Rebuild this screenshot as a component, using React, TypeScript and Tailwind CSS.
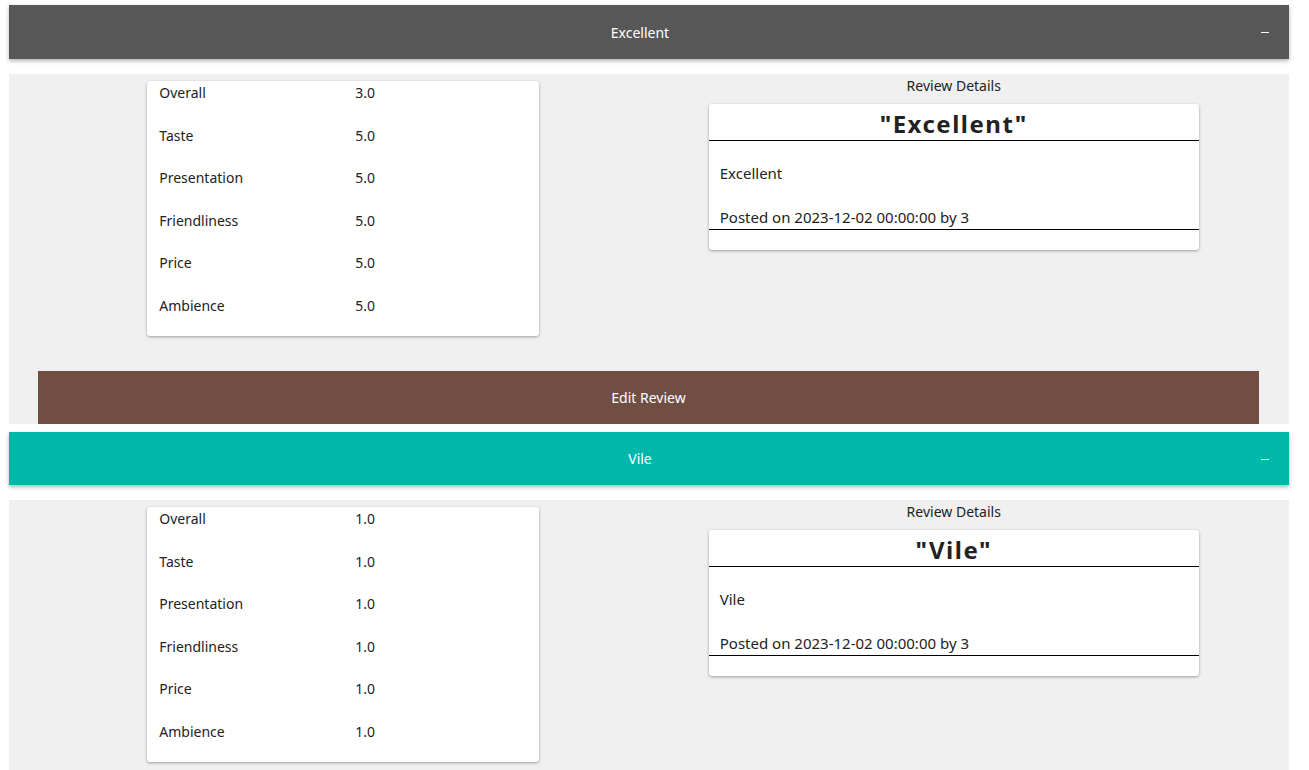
const reviews = [
  {
    title: 'Excellent',
    bar: 'bg-[#575757]',
    body: 'Excellent',
    posted: 'Posted on 2023-12-02 00:00:00 by 3',
    ratings: [
      ['Overall', '3.0'],
      ['Taste', '5.0'],
      ['Presentation', '5.0'],
      ['Friendliness', '5.0'],
      ['Price', '5.0'],
      ['Ambience', '5.0'],
    ],
    editable: true,
  },
  {
    title: 'Vile',
    bar: 'bg-[#00b8a9]',
    body: 'Vile',
    posted: 'Posted on 2023-12-02 00:00:00 by 3',
    ratings: [
      ['Overall', '1.0'],
      ['Taste', '1.0'],
      ['Presentation', '1.0'],
      ['Friendliness', '1.0'],
      ['Price', '1.0'],
      ['Ambience', '1.0'],
    ],
    editable: false,
  },
];

type Review = (typeof reviews)[number];

function ReviewBlock({ review, first }: { review: Review; first: boolean }) {
  return (
    <div>
      {/* Collapsible header */}
      <div
        className={`${first ? 'mt-[5px] h-[54px]' : 'mt-[8px] h-[53px]'} ml-[9px] mr-[20px] ${review.bar} relative flex items-center justify-center pr-[18px] text-white text-[14px] shadow-[0_2px_4px_rgba(0,0,0,0.3)]`}
      >
        <span>{review.title}</span>
        <span className="absolute right-[20px] top-1/2 w-[8px] h-[1px] bg-white" />
      </div>

      {/* Body */}
      <div className="mt-[15px] ml-[9px] mr-[20px] bg-[#f0f0f0] pl-[29px] pr-[30px]">
        <div className="grid grid-cols-2">
          <div className="pt-[7px] flex justify-center">
            <div className="w-[392px] bg-white rounded-[3px] shadow-[0_1px_3px_rgba(0,0,0,0.35)] px-[12px]">
              {review.ratings.map(([label, value]) => (
                <div key={label} className="grid grid-cols-[196px_1fr] h-[42.5px] leading-[24px] text-[14px] text-[#222]">
                  <span>{label}</span>
                  <span>{value}</span>
                </div>
              ))}
            </div>
          </div>
          <div className="pt-[2px] flex flex-col items-center">
            <div className="text-[14px] leading-5 text-[#222]">Review Details</div>
            <div className="mt-[8px] w-[490px] bg-white rounded-[3px] shadow-[0_1px_3px_rgba(0,0,0,0.35)]">
              <div className="h-[37px] pt-[3px] border-b border-black flex items-center justify-center text-[24px] font-bold tracking-[1.5px] text-[#222]">
                "{review.title}"
              </div>
              <div className="px-[11px] pt-[22px] text-[15px] leading-5 text-[#222]">{review.body}</div>
              <div className="px-[11px] mt-[24px] text-[15px] leading-5 text-[#222] border-b border-black pb-[2px]">
                {review.posted}
              </div>
              <div className="h-[20px]" />
            </div>
          </div>
        </div>
        {review.editable ? (
          <button className="mt-[35px] w-full h-[53px] bg-[#714e42] text-white text-[14px] flex items-center justify-center">
            Edit Review
          </button>
        ) : (
          <div className="h-[10px]" />
        )}
      </div>
    </div>
  );
}

export default function App() {
  return (
    <div className="min-h-screen bg-white font-['Noto_Sans',sans-serif] overflow-hidden">
      {reviews.map((review, i) => (
        <ReviewBlock key={review.title} review={review} first={i === 0} />
      ))}
    </div>
  );
}
